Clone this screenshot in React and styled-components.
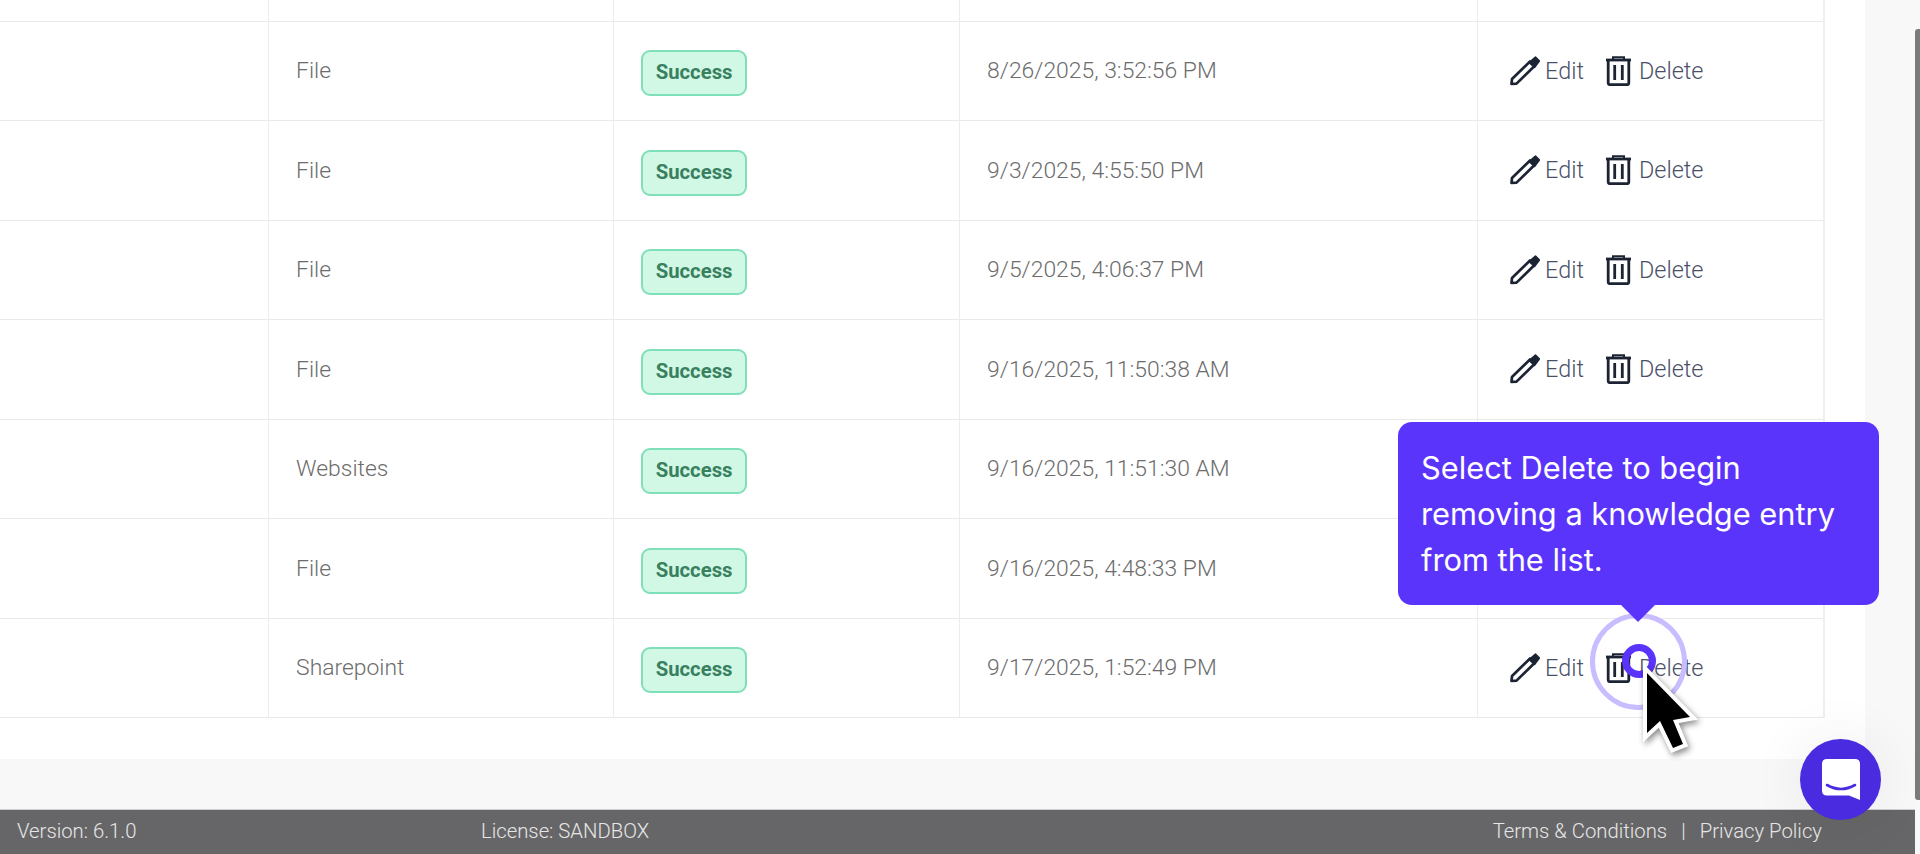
import React from "react";
import styled, { createGlobalStyle } from "styled-components";

const Global = createGlobalStyle`
  html, body { margin: 0; padding: 0; height: 100%; overflow: hidden; background: #f8f8f8; }
  #root { height: 100%; }
  * { box-sizing: border-box; }
`;

const Page = styled.div`
  position: relative;
  display: flex;
  width: 1920px;
  height: 854px;
  overflow: hidden;
  font-family: Roboto, "Liberation Sans", sans-serif;
`;
const Column = styled.div`
  display: flex;
  flex-direction: column;
  width: 1915px;
  height: 100%;
`;
const Track = styled.div`
  width: 5px;
  padding-top: 29px;
  background: #f8f8f8;
`;
const Thumb = styled.div`
  height: 771px;
  background: #7b7b7b;
  border-radius: 3px 0 0 3px;
`;
const Content = styled.main`
  flex: 1;
  min-height: 0;
  background: #f8f8f8;
`;
const Panel = styled.section`
  width: 1865px;
  height: 759px;
  background: #fff;
`;
const Table = styled.table`
  width: 1824px;
  table-layout: fixed;
  border-collapse: collapse;
  border-right: 2px solid #efefef;
`;
const Row = styled.tr`
  height: ${(p) => p.$h}px;
  border-bottom: 1.5px solid #e9e9e9;
`;
const Cell = styled.td`
  padding: 0 0 0 27.6px;
  border-right: 1.5px solid #ececec;
  font-size: 22.9px;
  font-weight: 300;
  color: #6c6c6c;
  white-space: nowrap;
  vertical-align: middle;
`;
const Badge = styled.span`
  display: inline-flex;
  align-items: center;
  justify-content: center;
  width: 106px;
  height: 46px;
  margin-top: 5px;
  padding-bottom: 2px;
  border: 2px solid #7fdfb8;
  border-radius: 9px;
  background: #d1f8e5;
  color: #39805f;
  font-size: 20.3px;
  font-weight: 700;
`;
const Actions = styled.div`
  display: flex;
  align-items: center;
  gap: 22px;
  padding-left: 5px;
`;
const Action = styled.span`
  display: inline-flex;
  align-items: center;
  gap: ${(p) => p.$gap}px;
  color: #4a5068;
  font-size: 23.4px;
  font-weight: 300;
`;
const Footer = styled.footer`
  display: flex;
  align-items: center;
  height: 45px;
  padding: 0 93px 2px 17px;
  border-top: 1px solid #cfcfcf;
  background: #666668;
  color: #e6e6e6;
  font-size: 20.3px;
  font-weight: 300;
`;
const Version = styled.span`
  width: 464px;
`;
const License = styled.span`
  flex: 1;
`;
const Sep = styled.span`
  margin: 0 14px;
`;
const Tooltip = styled.div`
  position: absolute;
  left: 1398px;
  top: 422px;
  width: 481px;
  height: 183px;
  padding: 23px 23px 0;
  border-radius: 14px;
  background: #5b34fb;
  color: #fff;
  font-family: Inter, sans-serif;
  font-size: 30.8px;
  line-height: 46px;
  &::after {
    content: "";
    position: absolute;
    left: 223px;
    bottom: -17px;
    border-left: 17px solid transparent;
    border-right: 17px solid transparent;
    border-top: 17px solid #5b34fb;
  }
`;
const RingOuter = styled.div`
  position: absolute;
  left: 1590px;
  top: 613px;
  width: 97px;
  height: 97px;
  border: 5px solid #c9bdff;
  border-radius: 50%;
`;
const RingInner = styled.div`
  position: absolute;
  left: 1622px;
  top: 644px;
  width: 34px;
  height: 34px;
  border: 7px solid #5b34fb;
  border-radius: 50%;
`;
const Pointer = styled.svg`
  position: absolute;
  left: 1635px;
  top: 665px;
  filter: drop-shadow(2px 3px 3px rgba(0, 0, 0, 0.45));
`;
const Chat = styled.button`
  position: absolute;
  left: 1800px;
  top: 739px;
  display: flex;
  align-items: center;
  justify-content: center;
  width: 81px;
  height: 81px;
  padding: 0;
  border: 0;
  border-radius: 50%;
  background: #4a2be0;
  box-shadow: 0 0 60px rgba(0, 0, 0, 0.07);
`;

const Pencil = () => (
  <svg width="30" height="30" viewBox="0 0 30 30" fill="none">
    <path d="M1.5 28 L2 23 L20 5.5 L24.5 10 L6.5 27.6 Z" stroke="#1c2434" strokeWidth="2.7" strokeLinejoin="round" />
    <path d="M19 6.5 L25.5 1 L29.5 5 L24.5 11.5 Z" fill="#1c2434" stroke="#1c2434" strokeWidth="1.5" strokeLinejoin="round" />
  </svg>
);
const Trash = () => (
  <svg width="25" height="30" viewBox="0 0 25 30" fill="none" stroke="#1c2434" strokeWidth="2.8">
    <path d="M0 4 H25" />
    <path d="M7 3 V1.2 H18 V3" strokeWidth="2" />
    <path d="M2.2 4 V27 Q2.2 28.7 4 28.7 H21 Q22.8 28.7 22.8 27 V4" />
    <path d="M8.7 9 V24 M16.3 9 V24" />
  </svg>
);

const rows = [
  ["File", "8/26/2025, 3:52:56 PM"],
  ["File", "9/3/2025, 4:55:50 PM"],
  ["File", "9/5/2025, 4:06:37 PM"],
  ["File", "9/16/2025, 11:50:38 AM"],
  ["Websites", "9/16/2025, 11:51:30 AM"],
  ["File", "9/16/2025, 4:48:33 PM"],
  ["Sharepoint", "9/17/2025, 1:52:49 PM"],
];

export default function App() {
  return (
    <Page>
      <Global />
      <Column>
        <Content>
          <Panel>
            <Table>
              <colgroup>
                <col style={{ width: 268 }} />
                <col style={{ width: 345 }} />
                <col style={{ width: 346 }} />
                <col style={{ width: 518 }} />
                <col style={{ width: 347 }} />
              </colgroup>
              <tbody>
                <Row $h={21}>
                  <Cell /><Cell /><Cell /><Cell /><Cell />
                </Row>
                {rows.map(([type, date], i) => (
                  <Row $h={99.5} key={i}>
                    <Cell />
                    <Cell>{type}</Cell>
                    <Cell><Badge>Success</Badge></Cell>
                    <Cell>{date}</Cell>
                    <Cell>
                      <Actions>
                        <Action $gap={5}><Pencil />Edit</Action>
                        <Action $gap={8}><Trash />Delete</Action>
                      </Actions>
                    </Cell>
                  </Row>
                ))}
              </tbody>
            </Table>
          </Panel>
        </Content>
        <Footer>
          <Version>Version: 6.1.0</Version>
          <License>License: SANDBOX</License>
          <span>Terms &amp; Conditions</span>
          <Sep>|</Sep>
          <span>Privacy Policy</span>
        </Footer>
      </Column>
      <Track><Thumb /></Track>
      <Chat aria-label="Chat">
        <svg width="38" height="42" viewBox="0 0 38 42">
          <path d="M5 0 H33 Q38 0 38 5 V41 L27 36.5 H5 Q0 36.5 0 31.5 V5 Q0 0 5 0 Z" fill="#fff" />
          <path d="M5 26 Q19 34 33 26" fill="none" stroke="#4a2be0" strokeWidth="2.6" strokeLinecap="round" />
        </svg>
      </Chat>
      <RingOuter />
      <RingInner />
      <Tooltip>Select Delete to begin removing a knowledge entry from the list.</Tooltip>
      <Pointer width="70" height="100" viewBox="0 0 70 100">
        <path d="M12 8 L55 52 L38 55 L48 79 L38 83 L25 56 L12 68 Z" fill="#000" stroke="#fff" strokeWidth="8" strokeLinejoin="miter" paintOrder="stroke" />
      </Pointer>
    </Page>
  );
}
